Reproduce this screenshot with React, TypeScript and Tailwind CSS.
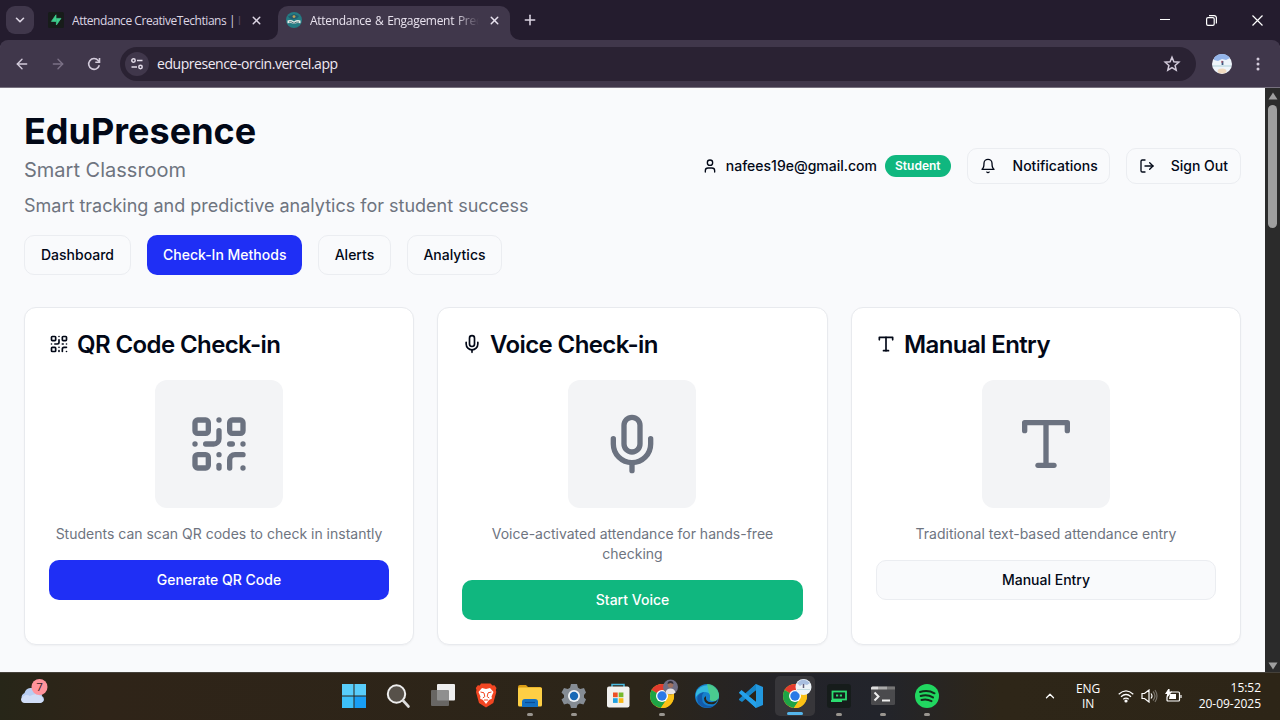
import React from "react";
import { ArrowLeft, ArrowRight, ChevronDown, ChevronUp, LogOut, Mic, Plus, QrCode, User, X } from "lucide-react";

type IconProps = { className?: string };

const SYS = "font-['Open_Sans','Noto_Sans',sans-serif]";

function Bell({ className }: IconProps) {
  return (
    <svg viewBox="0 0 24 24" fill="none" stroke="currentColor" strokeWidth="2" strokeLinecap="round" strokeLinejoin="round" className={className}>
      <path d="M6 8a6 6 0 0 1 12 0c0 7 3 9 3 9H3s3-2 3-9" />
      <path d="M10.3 21a1.94 1.94 0 0 0 3.4 0" />
    </svg>
  );
}

function TypeIcon({ className }: IconProps) {
  return (
    <svg viewBox="0 0 24 24" fill="none" stroke="currentColor" strokeWidth="2" strokeLinecap="round" strokeLinejoin="round" className={className}>
      <polyline points="4 7 4 4 20 4 20 7" />
      <line x1="9" x2="15" y1="20" y2="20" />
      <line x1="12" x2="12" y1="4" y2="20" />
    </svg>
  );
}

function TabStrip() {
  return (
    <div className="flex h-10 shrink-0 items-stretch bg-[#241c2e] text-[#dcd5e3]">
      <div className="flex w-[34px] items-center pl-[6px]">
        <button className="flex size-7 items-center justify-center rounded-[9px] bg-[#40374b]">
          <ChevronDown className="size-[14px]" strokeWidth={2.8} />
        </button>
      </div>
      <div className="flex w-[234px] items-center pl-[14px]">
        <svg viewBox="0 0 16 16" className="size-4 shrink-0">
          <rect width="16" height="16" rx="1.5" fill="#171c1a" />
          <path d="M8 2.8v6.600H3.400zM8.400 6.400V13l4.600-6.600z" fill="#3ecf8e" stroke="#3ecf8e" strokeWidth=".7" strokeLinejoin="round" />
        </svg>
        <span className="ml-2 w-[169px] shrink-0 overflow-hidden pt-[2px] text-[12px] tracking-[-0.44px] whitespace-nowrap">Attendance CreativeTechtians | <span className="text-[#55495f]">I</span></span>
        <X className="ml-[9px] size-[13px] shrink-0" strokeWidth={2.7} />
      </div>
      <div className="flex w-[252px] items-end">
        <svg viewBox="0 0 10 34" className="h-[34px] w-[10px] shrink-0 self-end"><path d="M0 34a10 10 0 0 0 10-10v10z" fill="#40374b" /></svg>
        <div className="flex h-[34px] w-[232px] items-center rounded-t-[10px] bg-[#40374b] pb-[6px] pl-2 text-[#e8e2ee]">
          <svg viewBox="0 0 16 16" className="size-4 shrink-0">
            <circle cx="8" cy="8" r="8" fill="#247b83" />
            <path d="M2 4.5 8 2l5 2-2 2.5-4 1-3-1z" fill="#245b6d" />
            <circle cx="8" cy="4.6" r="1.4" fill="#c2a253" />
            <path d="M1.5 8.5q3.5-1.3 6.5 1 3-2.3 6.5-1v2.8q-3.5-1-6.5.6-3-1.6-6.5-.6z" fill="#e3ede8" />
            <path d="m3 10 2-.3 2 1 1 .7 2-1.2 3-.2" fill="none" stroke="#28545f" strokeWidth=".8" />
          </svg>
          <span className="ml-2 w-[169px] shrink-0 overflow-hidden pt-[2px] text-[12px] tracking-[-0.3px] whitespace-nowrap [mask-image:linear-gradient(to_right,black_86%,transparent)] [word-spacing:1px]">Attendance &amp; Engagement Predictor</span>
          <X className="ml-[9px] size-[13px] shrink-0" strokeWidth={2.7} />
        </div>
        <svg viewBox="0 0 10 34" className="h-[34px] w-[10px] shrink-0 self-end"><path d="M10 34A10 10 0 0 1 0 24v10z" fill="#40374b" /></svg>
      </div>
      <div className="flex flex-1 items-center pl-[2px]"><Plus className="size-4" strokeWidth={2.3} /></div>
      <div className="flex items-center text-white">
        <div className="flex w-[46px] justify-center"><svg viewBox="0 0 10 10" className="size-[10px]"><path d="M0 4.5h10" stroke="currentColor" /></svg></div>
        <div className="flex w-[46px] justify-center"><svg viewBox="0 0 11 11" className="size-[11px]" fill="none" stroke="currentColor" strokeWidth="1.200"><rect x=".6" y="2.6" width="7.6" height="7.8" rx="1.4" /><path d="M3 .6h5A2.3 2.3 0 0 1 10.400 3v5.400" /></svg></div>
        <div className="flex w-[46px] justify-center"><svg viewBox="0 0 11 11" className="size-[11px]" stroke="currentColor" strokeWidth="1.2"><path d="m.5.5 10 10m0-10-10 10" /></svg></div>
      </div>
    </div>
  );
}

function Toolbar() {
  return (
    <div className="flex h-[47px] shrink-0 bg-[#241c2e]">
      <div className="flex flex-1 items-center rounded-t-[8px] bg-[#40374b] text-[#d3cbdb] shadow-[0_1px_0_#77717f]">
        <div className="flex w-[120px] shrink-0 items-center pl-[14px]">
          <ArrowLeft className="size-4" strokeWidth={2.1} />
          <ArrowRight className="ml-5 size-4 text-[#7b7186]" strokeWidth={2.1} />
          <svg viewBox="0 0 16 16" className="ml-5 size-4" fill="none" stroke="currentColor" strokeWidth="1.600">
            <path d="M13.300 9.300A5.400 5.400 0 1 1 12.200 4.500L13.400 5.900" />
            <path d="M13.500 2v4.200H9.300" />
          </svg>
        </div>
        <div className="flex h-[34px] w-[1076px] shrink-0 items-center rounded-full bg-[#2a2233] pr-[15px] pl-[5px]">
          <div className="flex size-6 items-center justify-center rounded-full bg-[#40374b]">
            <svg viewBox="0 0 14 14" className="size-[14px]" fill="none" stroke="#e3dce9" strokeWidth="1.500">
              <circle cx="3.500" cy="3.500" r="1.700" /><path d="M7 3.500h5.500" /><circle cx="10.500" cy="10" r="1.700" /><path d="M1.500 10H7" />
            </svg>
          </div>
          <span className="ml-2 flex-1 text-[14px] tracking-[-0.45px] text-[#eee8f2]">edupresence-orcin.vercel.app</span>
          <svg viewBox="0 0 18 18" className="size-[18px]" fill="none" stroke="currentColor" strokeWidth="1.500"><path d="m9 2.300 1.900 4.500 4.900.4-3.700 3.200 1.100 4.800L9 12.600l-4.200 2.600 1.100-4.800-3.700-3.200 4.900-.4z" /></svg>
        </div>
        <svg viewBox="0 0 20 20" className="ml-4 size-5 shrink-0">
          <circle cx="10" cy="10" r="10" fill="#eef4fa" />
          <path d="M2 4a10 10 0 0 1 16 0l-4 2-4-1-4 2-4-1z" fill="#94b5ea" />
          <path d="M1 12h18" stroke="#afd0d8" /><ellipse cx="10" cy="17" rx="4.500" ry="2.500" fill="#f1dac0" />
          <path d="M10.500 7v4" stroke="#415b83" strokeWidth="1.800" /><path d="M10 6.800v2" stroke="#c34854" />
        </svg>
        <svg viewBox="0 0 4 14" className="ml-[24px] h-[14px] w-1" fill="currentColor"><circle cx="2" cy="2" r="1.500" /><circle cx="2" cy="7" r="1.500" /><circle cx="2" cy="12" r="1.500" /></svg>
      </div>
    </div>
  );
}

const outline = "flex items-center justify-center rounded-[10px] border border-[#ebedf1] bg-[#f9fafc] text-sm font-medium";

type CardProps = { title: string; icon: React.ReactNode; art: React.ReactNode; text: string; action: string; tone: string };

function MethodCard({ title, icon, art, text, action, tone }: CardProps) {
  return (
    <section className="rounded-xl border border-[#e8eaee] bg-white p-6 shadow-[0_1px_2px_rgba(0,0,0,0.04)]">
      <h3 className="flex h-6 items-center gap-2 text-2xl leading-6 font-semibold tracking-tight">{icon}<span className="pt-[2px]">{title}</span></h3>
      <div className="mt-6 flex flex-col items-center">
        <div className="ml-[106px] flex size-32 items-center justify-center self-start rounded-[12px] bg-[#f3f4f6] text-[#6b7280]">{art}</div>
        <p className="mt-4 w-[340px] text-center text-sm leading-5 text-[#6e747f]">{text}</p>
        <button className={tone}>{action}</button>
      </div>
    </section>
  );
}

function Page() {
  return (
    <main className="flex-1 bg-[#f9fafc] p-6 font-['Inter',sans-serif] text-[#020817]">
      <header className="flex items-center justify-between">
        <div>
          <h1 className="text-4xl leading-10 font-bold">EduPresence</h1>
          <p className="mt-[5px] text-xl leading-7 text-[#6e747f]">Smart Classroom</p>
          <p className="mt-2 text-lg leading-7 text-[#6e747f]">Smart tracking and predictive analytics for student success</p>
        </div>
        <div className="flex items-center gap-4">
          <div className="flex items-center gap-2">
            <User className="size-4" />
            <span className="text-sm font-medium">nafees19e@gmail.com</span>
            <span className="rounded-full bg-[#10b77f] px-[10px] py-[3px] text-xs leading-4 font-semibold text-white">Student</span>
          </div>
          <button className={`${outline} h-9 pr-[11px] pl-3`}><Bell className="mr-[17px] size-4" />Notifications</button>
          <button className={`${outline} h-9 px-3`}><LogOut className="mr-4 size-4" />Sign Out</button>
        </div>
      </header>
      <nav className="mt-[15px] flex gap-4">
        <button className={`${outline} h-10 px-4`}>Dashboard</button>
        <button className="flex h-10 items-center rounded-[10px] bg-[#1f2ff5] px-4 text-sm font-medium text-white">Check-In Methods</button>
        <button className={`${outline} h-10 w-[73px] pr-px`}>Alerts</button>
        <button className={`${outline} h-10 w-[95px] pr-px`}>Analytics</button>
      </nav>
      <div className="mt-8 grid grid-cols-[390px_391px_390px] gap-[23px]">
        <MethodCard title="QR Code Check-in" icon={<QrCode className="size-5" />} art={<QrCode className="size-16" />} text="Students can scan QR codes to check in instantly" action="Generate QR Code" tone="mt-4 h-10 w-full rounded-[10px] bg-[#1f2ff5] text-sm font-medium text-white" />
        <MethodCard title="Voice Check-in" icon={<Mic className="size-5" />} art={<Mic className="size-16" />} text="Voice-activated attendance for hands-free checking" action="Start Voice" tone="mt-4 h-10 w-full rounded-[10px] bg-[#10b77f] text-sm font-medium text-white" />
        <MethodCard title="Manual Entry" icon={<TypeIcon className="size-5" />} art={<TypeIcon className="size-16" />} text="Traditional text-based attendance entry" action="Manual Entry" tone="mt-4 h-10 w-full rounded-[10px] border border-[#ebedf1] bg-[#f9fafc] text-sm font-medium" />
      </div>
    </main>
  );
}

function Scrollbar() {
  return (
    <div className="flex w-[15px] shrink-0 flex-col items-center bg-[#2b2b2b]">
      <svg viewBox="0 0 10 8" className="mt-[5px] h-2 w-[10px]"><path d="M5 .5 9.500 7.500H.5z" fill="#9f9f9f" /></svg>
      <div className="mt-[5px] h-[123px] w-[9px] rounded-full bg-[#9f9f9f]" />
      <svg viewBox="0 0 10 8" className="mt-auto mb-[2px] h-2 w-[10px]"><path d="M5 7.500.5.500h9z" fill="#9f9f9f" /></svg>
    </div>
  );
}

function Chrome() {
  return (
    <g>
      <circle cx="12" cy="12" r="12" fill="#fbc116" />
      <path d="M12 12 1.600 6A12 12 0 0 1 22.400 6z" fill="#e33b2e" />
      <path d="M12 12 1.600 6a12 12 0 0 0 9.200 17.900L17 15z" fill="#1ea446" />
      <path d="M12 6h10.400A12 12 0 0 1 10.800 24L17 15z" fill="#fbc116" />
      <circle cx="12" cy="12" r="6" fill="#fff" /><circle cx="12" cy="12" r="4.700" fill="#2b79e6" />
    </g>
  );
}

const apps: { name: string; running?: boolean; active?: boolean; art: React.ReactNode }[] = [
  { name: "start", art: <g><path d="M0 0h11.500v11.500H0zM12.500 0H24v11.500H12.500z" fill="#58cdfb" /><path d="M0 12.500h11.500V24H0z" fill="#3dc0f9" /><path d="M12.500 12.500H24V24H12.500z" fill="#189ef5" /></g> },
  { name: "search", art: <g><circle cx="10.500" cy="10" r="8.700" fill="#57514a" stroke="#eee" strokeWidth="2" /><path d="m17 16.500 5.500 6" stroke="#ddd" strokeWidth="2.600" strokeLinecap="round" /></g> },
  { name: "task view", art: <g><rect x="7" y="0" width="18" height="16.500" rx="1" fill="#eee" /><rect x="1" y="6" width="18" height="16" rx="1" fill="#777" fillOpacity=".8" /></g> },
  { name: "brave", art: <g><path d="m7-.5 9.500 0 2 2 2-.3L22.500 4l-.7 2 .5 2-3 11L12 23.500 5 19 2 8l.5-2-.7-2 2-2.800 2 .3z" fill="#f24622" /><path d="m8 4 4 1 4-1 3.500 4-2 4.500.5 2-3 1.500L12 20l-3-4-3-1.500.5-2-2-4.500z" fill="#fff" /><path d="m6.500 8 3.500.8M17.500 8l-3.500.8M10 9l.8 3.500-2 1.500M14 9l-.8 3.500 2 1.500M10 16h4" fill="none" stroke="#f24622" strokeWidth="1" /></g> },
  { name: "files", running: true, art: <g><path d="M0 3Q0 1 2 1h6l2 2h12q2 0 2 2v6H0z" fill="#d99c15" /><rect y="3.500" width="24" height="19" rx="1.500" fill="#fdcf45" /><path d="M4 23v-5q0-3 3-3h10q3 0 3 3v5z" fill="#1470c1" /><path d="M7 18.500h10" stroke="#0a4c93" strokeWidth="1.200" /></g> },
  { name: "settings", running: true, art: <g><path d="m9 0h6l1 3.800 2.200 1.200L22 4l2 4.500-2 2.500v2.500l2 2-2.500 5-3.700-1-2.300 1.300-1 3.200H9l-1-3.200L5.700 19.500 2 20.500-.5 15.500 2 13.500V11L-.5 8.500 2 4l3.800 1L8 3.800z" fill="#858c94" /><circle cx="12" cy="12" r="6" fill="#f0f3f6" /><circle cx="12" cy="12" r="4.200" fill="#1769b6" /></g> },
  { name: "store", art: <g><path d="M6 4V.5h12V4" fill="none" stroke="#4abbe1" strokeWidth="1.500" /><rect x="1" y="2.500" width="22.500" height="21" rx="2" fill="#f1f1ef" /><path d="M7 8.500h4.700v4.700H7z" fill="#ec5027" /><path d="M12.700 8.500h4.700v4.700h-4.700z" fill="#75b92c" /><path d="M7 14.200h4.700v4.700H7z" fill="#1fa0e0" /><path d="M12.700 14.200h4.700v4.700h-4.700z" fill="#f8b715" /></g> },
  { name: "chrome", running: true, art: <g><Chrome /><circle cx="20.500" cy="3" r="7.500" fill="#716f85" /><path d="M15.500 8.500q1-4 5-4t5 4l-2 1.500h-6z" fill="#e6e3e5" /><circle cx="20.500" cy="1" r="2.800" fill="#9f7160" /><path d="M17.500 0q0-3 3-3t3 3l-3-1z" fill="#332e39" /></g> },
  { name: "edge", art: <g><circle cx="12" cy="12" r="12" fill="#1680cd" /><path d="M1 9A12 12 0 0 1 24 11q0 6-6 6-4 0-3-3 1-6-5-6-6 0-9 5z" fill="#35b9df" /><path d="M12 0a12 12 0 0 1 12 11q0 6-6 6-4 0-3-3 1-3-1-5z" fill="#50cf7b" fillOpacity=".8" /><path d="M7 14q0 8 9 8 4 0 6-3A12 12 0 0 1 3 19Q0 10 9 8q-2 2-2 6z" fill="#135aa9" /><path d="M11 12q-1 7 7 6 3 0 5-3-1.200 4-4.600 5.300Q9 21 9 14z" fill="#2a2419" /></g> },
  { name: "code", art: <g><path d="M17 0 24 3v18l-7 3-13-12z" fill="#2298df" /><path d="M17 6v12l-8-6z" fill="#2b2418" /><path d="M17 0v6L3 18l-3-2v-1z" fill="#1686c9" /><path d="M0 8.500 2.500 6 17 18v6L0 9z" fill="#24a1eb" /></g> },
  { name: "chrome profile", running: true, active: true, art: <g><Chrome /><circle cx="20.500" cy="3" r="8" fill="#edf3f8" /><path d="M14-1q6-7 13 0l-3 2-4-1-3 2z" fill="#a9bedf" /><path d="M20.500 0v4" stroke="#625d78" strokeWidth="1.500" /><path d="M14 5.500h13" stroke="#c4dce1" /></g> },
  { name: "console", running: true, art: <g><rect width="24" height="24" rx="3" fill="#161c1b" /><rect x="5.500" y="7.500" width="13.500" height="8" fill="none" stroke="#2bdd70" strokeWidth="1.800" /><path d="M9 11.500h2.200m1.600 0H15" stroke="#2bdd70" strokeWidth="2" /><path d="M4 17h11" stroke="#2bdd70" strokeWidth="2" /></g> },
  { name: "terminal", running: true, art: <g><rect y="2.500" width="24" height="18.500" rx="1.500" fill="#4a4a4d" /><path d="M0 5.500V4q0-1.500 1.500-1.500H7v3z" fill="#ddd" /><path d="M7 2.500h9v3H7z" fill="#aaa" /><path d="M16 2.500h8v3h-8z" fill="#777" /><path d="m3.500 8.500 4 4-4 4" fill="none" stroke="#eee" strokeWidth="2" /><path d="M11 16.500h8" stroke="#eee" strokeWidth="2" /></g> },
  { name: "spotify", running: true, art: <g><circle cx="12" cy="12" r="12" fill="#21d760" /><path d="M5 8q8-2.500 14.500 1.300M5.700 12q6.500-2 12.300 1.400M6.500 16q5-1.500 10 1.100" fill="none" stroke="#132c1b" strokeWidth="2" strokeLinecap="round" /></g> },
];

function Taskbar() {
  return (
    <footer className={`${SYS} flex h-12 shrink-0 items-stretch border-t border-[#45413a] bg-[linear-gradient(90deg,#272618_0px,#2f2418_100px,#2c2519_640px,#232329_790px,#22242b_880px,#2e2618_1000px,#2d2517_1280px)] text-white`}>
      <div className="flex w-[332px] items-start pt-[6px] pl-[19px]">
        <svg viewBox="0 0 30 26" className="h-[26px] w-[30px]">
          <path d="M6 24a5.500 5.500 0 0 1-.5-10A7 7 0 0 1 18 12a5 5 0 0 1 5 5q2 1 2 3.500T21 24z" fill="#b8cef3" /><path d="M2 20q4-6 9-3 6-4 12 1 3 5-2 6H6q-4 0-4-4" fill="#d1def7" />
          <circle cx="20.500" cy="8" r="8" fill="#ff939c" /><text x="20.500" y="12" textAnchor="middle" fontSize="11.500" fontFamily="Open Sans" fill="#342126">7</text>
        </svg>
      </div>
      <div className="flex">
        {apps.map((app) => (
          <div key={app.name} className="flex w-[44.070px] flex-col items-center pt-[3px]">
            <div className={app.active ? "flex h-[40px] w-[40px] flex-col items-center rounded-[5px] bg-[#37363a] pt-2" : "flex h-[40px] w-[40px] flex-col items-center pt-2"}>
              <svg viewBox="0 0 24 24" className="size-6 overflow-visible">{app.art}</svg>
              {app.running && <div className={app.active ? "mt-[4px] h-[3px] w-4 rounded-full bg-[#55b5eb]" : "mt-[5px] h-[3px] w-[6px] rounded-full bg-[#99958f]"} />}
            </div>
          </div>
        ))}
      </div>
      <div className="ml-auto flex items-center pr-[19px] pb-[2px] text-xs">
        <ChevronUp className="size-[14px]" strokeWidth={2.2} />
        <div className="ml-[19px] w-[24px] pt-px text-center leading-[15px] tracking-[-0.2px]">ENG<br />IN</div>
        <svg viewBox="0 0 16 14" className="ml-[18px] h-[14px] w-4" fill="none" stroke="white" strokeWidth="1.200"><path d="M.7 5.200q7.300-6.800 14.600 0M3 7.800q5-4.600 10 0M5.300 10.300q2.700-2.500 5.400 0" /><circle cx="8" cy="12" r="1" fill="white" /></svg>
        <svg viewBox="0 0 17 14" className="ml-[7px] h-[14px] w-[17px]" fill="none" stroke="white" strokeWidth="1.200"><path d="M1 4.500h2.500L8 1v12L3.500 9.500H1zM10 4.500q2 2.500 0 5" /><path d="M12 2.500q4 4.500 0 9M14 1q4 6 0 12" opacity=".35" /></svg>
        <svg viewBox="0 0 17 14" className="ml-[7px] h-[14px] w-[17px]" fill="none" stroke="white" strokeWidth="1.200"><path d="M6 3h7.500q1 0 1 1v7q0 1-1 1H3q-1 0-1-1V8" /><path d="M5 5h6v5H4z" fill="white" stroke="none" /><path d="M16 6v3M4 0 1 4.500h2L2 8l4-5H4z" fill="white" /></svg>
        <div className="ml-[15px] w-[64px] text-right leading-[16px] tracking-[-0.03px] whitespace-nowrap">15:52<br />20-09-2025</div>
      </div>
    </footer>
  );
}

export default function App() {
  return (
    <div className="flex h-[720px] w-[1280px] flex-col overflow-hidden bg-[#f9fafc]">
      <div className={`${SYS} relative`}><TabStrip /><Toolbar /></div>
      <div className="flex min-h-0 flex-1"><Page /><Scrollbar /></div>
      <Taskbar />
    </div>
  );
}
